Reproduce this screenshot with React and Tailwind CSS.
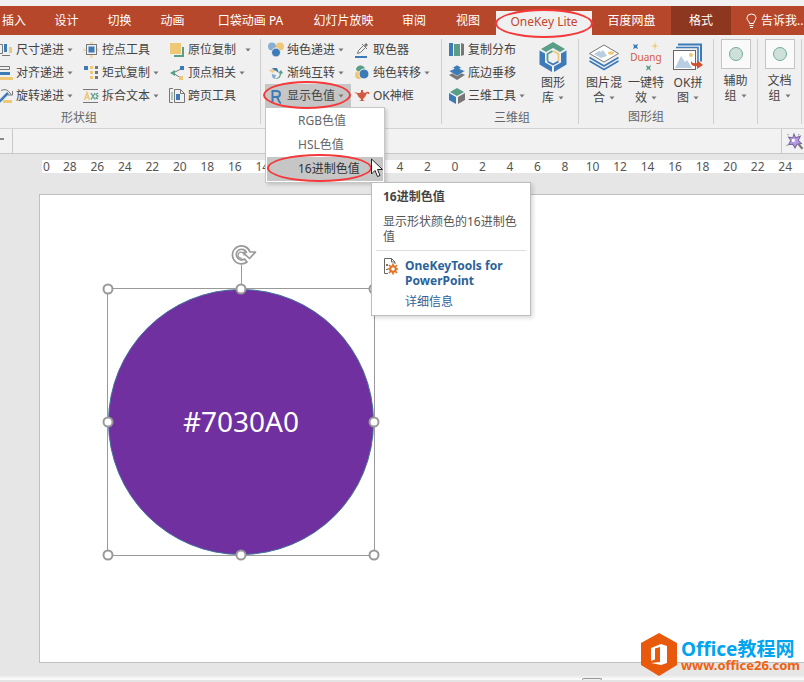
import React from "react";

const FONT = "font-['Noto_Sans','Noto_Sans_CJK_SC',sans-serif]";

const BLUE = "#3d7ab8";
const GREEN = "#5a9e87";
const YELLOW = "#efc877";
const GREY = "#777777";

/* ---------- small 16px ribbon icons ---------- */
const icons = {
  sizeStep: (
    <>
      <path d="M0 2.500h5.500v9H0M5 13.500h8" fill="none" stroke={GREY} />
      <rect x="7" y="2" width="3" height="8" fill={BLUE} />
      <rect x="12" y="5" width="3" height="6" fill={YELLOW} />
    </>
  ),
  alignStep: (
    <>
      <path d="M3 1.500h9.500v3H3" fill="none" stroke={GREY} />
      <rect x="1" y="7" width="12" height="3" fill={BLUE} />
      <rect x="1" y="12" width="15" height="3" fill={YELLOW} />
    </>
  ),
  rotateStep: (
    <>
      <path d="M2 14L11 5" stroke={BLUE} strokeWidth="2.500" />
      <path d="M4 2.500q6-3 10 4M15.500 3v4H11" fill="none" stroke={GREY} />
      <rect x="6" y="12" width="9" height="3" fill={YELLOW} />
    </>
  ),
  handles: (
    <>
      <path d="M8.500 0v16M0 8h16" stroke={YELLOW} strokeWidth="3" opacity=".45" />
      <rect x="3.500" y="2.500" width="10" height="10" fill="#f0f0f0" stroke={GREY} />
      <rect x="5.500" y="4.500" width="6" height="6" fill={BLUE} />
    </>
  ),
  matrix: (
    <>
      <rect x="1" y="1" width="4" height="4" fill={BLUE} />
      <rect x="7" y="1" width="3" height="3" fill={YELLOW} />
      <rect x="7" y="6" width="3" height="3" fill={YELLOW} />
      <rect x="7" y="11" width="3" height="3" fill={YELLOW} />
      <rect x="12" y="1" width="3" height="3" fill={GREY} />
      <rect x="12" y="6" width="3" height="3" fill={GREY} />
      <rect x="12" y="11" width="3" height="3" fill={GREY} />
    </>
  ),
  splitText: (
    <>
      <path d="M0 1.500h15M0 14.500h15" stroke={GREY} />
      <path d="M1.500 12l2.500-7.500L6.500 12M2 9.500h4" fill="none" stroke={YELLOW} strokeWidth="1.500" />
      <path d="M8 5l4 6.500M12 5L8 11.500M15 5l-2 1.500 2 1.500-2 2 2 1" fill="none" stroke={GREEN} strokeWidth="1.300" />
    </>
  ),
  copyInPlace: (
    <>
      <rect x="5" y="5" width="10" height="10" fill={GREEN} />
      <rect x=".500" y=".500" width="12" height="12" fill={YELLOW} stroke="#f0f0f0" />
    </>
  ),
  vertex: (
    <>
      <path d="M12 4L4 8l8 5" fill="none" stroke={GREY} />
      <rect x="11" y="1" width="4" height="4" fill={BLUE} />
      <path d="M1 8l5-3v6z" fill={GREEN} />
      <rect x="10" y="11" width="4" height="4" fill={YELLOW} />
    </>
  ),
  crossPage: (
    <>
      <path d="M4 .500H.500v14H4M5.500 1.500h6l4 4v9h-10zM11.500 1.500v4h4" fill="none" stroke={GREY} />
      <path d="M3 4v8" stroke={GREEN} />
      <rect x="7" y="6" width="4" height="6" fill={BLUE} />
    </>
  ),
  solidStep: (
    <>
      <circle cx="4" cy="4.500" r="4" fill="#87afd4" />
      <circle cx="12" cy="4.500" r="4" fill={YELLOW} />
      <circle cx="8" cy="10.500" r="4.500" fill={BLUE} stroke="#f0f0f0" />
    </>
  ),
  gradient: (
    <>
      <path d="M1 5l6-2 1 2-3 3q-3-1-4-3" fill={YELLOW} opacity=".8" />
      <path d="M4 3h5l2 5-3-2-2-1z" fill={BLUE} />
      <path d="M4 9l4 1-1 4q-4-1-3-5" fill="#87afd4" />
      <path d="M7 14l2-1q4-2 2-6l2-2 2 3-2 1q0 5-6 5" fill={GREEN} />
    </>
  ),
  letterR: (
    <path d="M4.500 15V3h4q3.500 0 3.500 3t-3.500 3h-4M8 9q1.500 0 2.500 3t2.500 3" fill="none" stroke={BLUE} strokeWidth="2" />
  ),
  picker: (
    <>
      <path d="M3.500 11.500l1-3 5-5 2 2-5 5zM8 2l5 5M11.500 4.500L13 3" fill="none" stroke={GREY} />
      <path d="M10 3l2-2 2 2-2 2z" fill={GREY} />
      <rect x="1" y="14" width="12" height="2" fill={BLUE} />
    </>
  ),
  transfer: (
    <>
      <path d="M2 5q0-4 4-4.500T11 4Q7 4 5.500 7z" fill={GREEN} />
      <circle cx="5" cy="10" r="4" fill={YELLOW} />
      <circle cx="10" cy="9" r="5" fill={BLUE} stroke="#f0f0f0" />
    </>
  ),
  lamp: (
    <path d="M0 4l4 1 2 0 1-1V2h2v2l2 1q2-2 4-1 1 2-1 2l-1-1-2 4-2 2v1l2 1H5l2-1v-1Q4 9 3 6z" fill="#d25a42" />
  ),
  copySpread: (
    <>
      <rect x="0" y="1" width="4" height="13" fill={BLUE} />
      <rect x="5" y="2" width="6" height="12" fill={GREEN} />
      <path d="M12 1l3 1v11l-3 1z" fill={GREY} />
    </>
  ),
  bottomShift: (
    <>
      <path d="M0 10l8-4 8 4-8 5z" fill={GREY} />
      <path d="M0 6l5-2V3H3l5-3 5 3h-2v1l5 2-8 5z" fill={BLUE} stroke="#f0f0f0" strokeWidth=".5" />
    </>
  ),
  cube: (
    <>
      <path d="M1 4l7-4 7 4-7 4z" fill={GREEN} />
      <path d="M0 5l7 4v7l-7-4z" fill={BLUE} />
      <path d="M16 5L9 9v7l7-4z" fill={GREY} />
    </>
  ),
};

function Icon({ name }) {
  return (
    <svg className="h-4 w-4 shrink-0" viewBox="0 0 16 16" aria-hidden="true">
      {icons[name]}
    </svg>
  );
}

function Caret({ className = "" }) {
  return (
    <svg className={"h-1 w-1.5 shrink-0 " + className} viewBox="0 0 6 4" aria-hidden="true">
      <path d="M.500 .500h5L3 3.500z" fill="#777" />
    </svg>
  );
}

function Tool({ icon, label, caret, far, active }) {
  return (
    <button
      type="button"
      className={
        "flex h-[23px] w-full items-center gap-[3px] whitespace-nowrap px-[3px] " +
        (active ? "bg-[#c6c6c6]" : "")
      }
    >
      <Icon name={icon} />
      <span>{label}</span>
      {caret && <Caret className={far ? "ml-1.5" : ""} />}
    </button>
  );
}

function Column({ children }) {
  return <div className="flex w-[86px] flex-col">{children}</div>;
}

function Group({ label, labelClass = "", className = "", children }) {
  return (
    <>
      <section className={"flex shrink-0 flex-col " + className}>
        <div className="flex h-[69px]">{children}</div>
        {label && (
          <h2 className={"flex h-[23px] items-center justify-center text-[#666] " + labelClass}>{label}</h2>
        )}
      </section>
      <div className="mb-1 mt-px w-px shrink-0 bg-[#cfcfcf]" />
    </>
  );
}

function BigTool({ lines, children }) {
  return (
    <button type="button" className="flex w-[42px] shrink-0 flex-col items-center gap-[3px] whitespace-nowrap pt-1">
      {children}
      <span className="leading-[15px]">
        {lines[0]}
        <span className="flex items-center justify-center gap-1">
          {lines[1]}
          <Caret />
        </span>
      </span>
    </button>
  );
}

function RoundTool({ text }) {
  return (
    <button type="button" className="flex w-full flex-col items-center gap-1 pt-px">
      <span className="flex h-[30px] w-[30px] items-center justify-center border border-[#c4c4c4] bg-[#fafafa]">
        <span className="h-3.5 w-3.5 rounded-full border border-[#6fae99] bg-[#cfe0da]" />
      </span>
      <span className="leading-[15px]">
        {text}
        <span className="flex items-center justify-center gap-1">
          组
          <Caret />
        </span>
      </span>
    </button>
  );
}

function Ring({ className }) {
  return (
    <span
      className={"pointer-events-none absolute rounded-[50%] border-2 border-[#f5383a] " + className}
      aria-hidden="true"
    />
  );
}

const tabs = [
  ["插入", "w-10 pr-3"],
  ["设计", "w-[53px]"],
  ["切换", "w-[53px]"],
  ["动画", "w-[53px]"],
  ["口袋动画 PA", "w-[103px]"],
  ["幻灯片放映", "w-[83px]"],
  ["审阅", "w-[58px]"],
  ["视图", "w-[50px]"],
];

function TabBar() {
  return (
    <nav className="flex h-[29px] items-end whitespace-nowrap bg-[#b7472a] text-white">
      {tabs.map(([name, width]) => (
        <button key={name} type="button" className={"h-[29px] shrink-0 text-center " + width}>
          {name}
        </button>
      ))}
      <button type="button" className="ml-[3px] h-6 w-24 shrink-0 bg-[#f0f0f0] pb-0.5 text-[#c4472b]">
        OneKey Lite
      </button>
      <button type="button" className="h-[29px] w-[79px] shrink-0">百度网盘</button>
      <button type="button" className="h-[29px] w-[60px] shrink-0 bg-[#8e3720]">格式</button>
      <button type="button" className="flex h-[29px] flex-1 items-center gap-1 pl-[15px]">
        <svg className="h-4 w-[11px] shrink-0" viewBox="0 0 11 16" fill="none" stroke="#fff" aria-hidden="true">
          <path d="M3.500 10.500q0-1.500-1.500-3T1 4.500Q1.500 1 5.500 1T10 4.500q0 1.500-1 3t-1.500 3zM3.500 12.500h4M4 14.500h3" />
        </svg>
        告诉我...
      </button>
    </nav>
  );
}

function Tooltip() {
  return (
    <div
      role="tooltip"
      className="absolute left-[106px] top-[75px] w-40 border border-[#bdbdbd] bg-white px-1 pb-[6px] pt-1.5 leading-[15px] text-[#555] shadow-[2px_2px_4px_rgba(0,0,0,0.15)]"
    >
      <p className="px-[7px] font-bold text-[#444]">16进制色值</p>
      <p className="mt-2.5 px-[7px]">显示形状颜色的16进制色值</p>
      <hr className="mt-1.5 border-[#dedede]" />
      <div className="flex gap-[7px] pl-2 pt-[7px]">
        <svg className="h-[18px] w-[14px] shrink-0" viewBox="0 0 14 18" aria-hidden="true">
          <path d="M4 15.500H.500V.500h7l3.500 3.500v2M7.500 .500V4H11" fill="none" stroke="#666" />
          <path d="M3 6v2M3 11v1" stroke="#777" strokeWidth="2" />
          <circle cx="9" cy="11" r="2.800" fill="none" stroke="#e37222" strokeWidth="2" />
          <path d="M9 5.500v3M9 13.500v3M3.500 11h3M11.500 11H14M5 7l2 2M11 13l2 2M13 7l-2 2M7 13l-2 2" stroke="#e37222" strokeWidth="1.700" />
        </svg>
        <div className="text-[#2b6299]">
          <p className="whitespace-nowrap font-bold">
            OneKeyTools for
            <br />
            PowerPoint
          </p>
          <a href="#details" className="mt-1.5 block">详细信息</a>
        </div>
      </div>
    </div>
  );
}

function ColorMenu() {
  return (
    <div className="absolute left-0 top-[23px] z-20 w-[120px]">
      <div className="border border-[#c6c6c6] bg-white p-px shadow-[2px_2px_3px_rgba(0,0,0,0.15)]">
        <button type="button" className="block h-6 w-full pl-[31px] text-left text-[#666]">RGB色值</button>
        <button type="button" className="block h-6 w-full pl-[31px] text-left text-[#666]">HSL色值</button>
        <button type="button" className="block h-6 w-full bg-[#c6c6c6] pl-[31px] text-left text-[#333]">
          16进制色值
        </button>
      </div>
      <Tooltip />
      <Ring className="left-[2px] top-[47px] h-[28px] w-[105px]" />
      <svg className="absolute left-[106px] top-[51px] h-5 w-[13px]" viewBox="0 0 13 20" aria-hidden="true">
        <path d="M.500 1v15l3.500-3.500 2.500 6 2.500-1-2.500-6h5z" fill="#fff" stroke="#222" />
      </svg>
    </div>
  );
}

function Ribbon() {
  return (
    <div className="flex h-[94px] border-b border-[#d2d2d2] bg-[#f0f0f0] pt-[3px]">
      <Group className="w-[260px]" label="形状组" labelClass="w-[158px]">
        <div className="-ml-1.5 flex">
          <Column>
            <Tool icon="sizeStep" label="尺寸递进" caret />
            <Tool icon="alignStep" label="对齐递进" caret />
            <Tool icon="rotateStep" label="旋转递进" caret />
          </Column>
          <Column>
            <Tool icon="handles" label="控点工具" />
            <Tool icon="matrix" label="矩式复制" caret />
            <Tool icon="splitText" label="拆合文本" caret />
          </Column>
          <Column>
            <Tool icon="copyInPlace" label="原位复制" caret far />
            <Tool icon="vertex" label="顶点相关" caret />
            <Tool icon="crossPage" label="跨页工具" />
          </Column>
        </div>
      </Group>

      <Group className="w-[180px] pl-1">
        <Column>
          <Tool icon="solidStep" label="纯色递进" caret />
          <Tool icon="gradient" label="渐纯互转" caret />
          <div className="relative">
            <Tool icon="letterR" label="显示色值" caret active />
            <ColorMenu />
            <Ring className="-left-0.5 -top-[3px] z-30 h-7 w-[88px]" />
          </div>
        </Column>
        <Column>
          <Tool icon="picker" label="取色器" />
          <Tool icon="transfer" label="纯色转移" caret />
          <Tool icon="lamp" label="OK神框" />
        </Column>
      </Group>

      <Group className="w-[136px] pl-1" label="三维组">
        <Column>
          <Tool icon="copySpread" label="复制分布" />
          <Tool icon="bottomShift" label="底边垂移" />
          <Tool icon="cube" label="三维工具" caret />
        </Column>
        <BigTool lines={["图形", "库"]}>
          <svg className="h-[30px] w-7" viewBox="0 0 28 30" aria-hidden="true">
            <path d="M2 7l12-7 12 7-5 3-7-4-7 4z" fill={GREEN} />
            <path d="M.500 8.500L6 11.500v9l7 4V30L.500 22.500z" fill={BLUE} />
            <path d="M27.500 8.500L22 11.500v9l-7 4V30l12.500-7.500z" fill={BLUE} />
            <path d="M8.500 19v-7l5-3" fill="none" stroke={GREEN} strokeWidth="1.800" />
            <path d="M14.500 9l5 3v7" fill="none" stroke={YELLOW} strokeWidth="1.800" />
            <path d="M19.500 19.500L14 22.500l-5.500-3" fill="none" stroke={BLUE} strokeWidth="1.800" />
          </svg>
        </BigTool>
      </Group>

      <Group className="w-[134px] px-1" label="图形组">
        <BigTool lines={["图片混", "合"]}>
          <svg className="h-[30px] w-8" viewBox="0 0 32 30" aria-hidden="true">
            <path d="M1.500 19L16 27.500 30.500 19M1.500 15.500L16 24l14.500-8.500" fill="none" stroke={BLUE} strokeWidth="1.700" />
            <path d="M1.500 11.500L16 3l14.500 8.500L16 20z" fill="#fff" stroke="#777" />
            <path d="M6 12l5-3 2 1 2-2 4 6-6 2z" fill="#b9cde3" />
            <ellipse cx="23" cy="11" rx="3" ry="1.700" fill={YELLOW} />
          </svg>
        </BigTool>
        <BigTool lines={["一键特", "效"]}>
          <span className="flex h-[30px] flex-col items-center">
            <svg className="h-2 w-7" viewBox="0 0 28 8" aria-hidden="true">
              <path d="M1 2l2.500 1L6 2 5 4.500 6 7 3.500 6 1 7l1-2.500z" fill={BLUE} />
              <path d="M23 0l.8 3.200L27 4l-3.200.8L23 8l-.8-3.200L19 4l3.200-.8z" fill={YELLOW} />
            </svg>
            <span className="text-[10px] leading-[14px] text-[#d05a40]">Duang</span>
            <svg className="h-2 w-7" viewBox="0 0 28 8" aria-hidden="true">
              <path d="M14 1l2.500 1.500L19 1l-1 3 1 3-2.500-2L14 7l1-3z" fill={GREEN} />
            </svg>
          </span>
        </BigTool>
        <BigTool lines={["OK拼", "图"]}>
          <svg className="h-[30px] w-[30px]" viewBox="0 0 30 30" aria-hidden="true">
            <path d="M5 2.500h23v17" fill="none" stroke={BLUE} strokeWidth="2" />
            <path d="M3 5.500h22v16" fill="none" stroke={BLUE} strokeWidth="1.500" />
            <rect x=".500" y="8.500" width="22" height="19" fill="#fff" stroke="#666" />
            <path d="M2 26l6-12 4 6 2-2 5 8z" fill="#b9cde3" />
            <circle cx="18" cy="13" r="2" fill={YELLOW} />
            <path d="M18 19q1 3 6 2v-3l6 5-6 4v-3q-7 1-6-5" fill="#d2502f" />
          </svg>
        </BigTool>
      </Group>

      <Group className="w-[43px]">
        <RoundTool text="辅助" />
      </Group>
      <Group className="w-[43px]">
        <RoundTool text="文档" />
      </Group>
    </div>
  );
}

function AnimationBar() {
  return (
    <div className="flex h-[25px] items-stretch border-b border-[#c9c9c9] bg-[#f2f2f2]">
      <div className="flex w-[13px] items-center border-r border-[#c9c9c9]">
        <span className="-mt-1 h-0.5 w-1 bg-[#888]" />
      </div>
      <div className="flex-1" />
      <button type="button" aria-label="动画" className="flex w-[23px] items-center justify-end border-l border-[#c9c9c9]">
        <svg className="h-[17px] w-[18px] shrink-0" viewBox="0 0 16 16" aria-hidden="true">
          <path d="M11 10l4 5" stroke="#777" strokeWidth="2" />
          <path d="M7 1l1.500 3.500L13 3l-2 4 3 3-4 .5L8 14l-2-3.500-4 .5 2-4-2-3 4 .5z" fill="#b99ae8" stroke="#7d6a9c" />
          <circle cx="6.500" cy="7" r="1.500" fill="#fff" />
          <path d="M1 1l1 1M12 1l-1 1M0 12l1-1" stroke="#999" />
        </svg>
      </button>
    </div>
  );
}

const ticks = Array.from({ length: 27 }, (_, i) => Math.abs(28 - i * 2));

function Ruler() {
  return (
    <div className="ml-[42px] mt-1.5 flex h-[13px] items-center bg-white pr-[5px] text-center text-[#555]">
      <span className="w-[14px] text-left pl-px">0</span>
      {ticks.map((n, i) => (
        <span key={i} className="min-w-0 flex-1">
          {n}
        </span>
      ))}
    </div>
  );
}

const handles = [
  "left-0 top-0",
  "left-1/2 top-0",
  "left-full top-0",
  "left-0 top-1/2",
  "left-full top-1/2",
  "left-0 top-full",
  "left-1/2 top-full",
  "left-full top-full",
];

function SelectedCircle() {
  return (
    <div className="absolute left-[67px] top-[93px] h-[268px] w-[268px] border border-[#999]">
      <div className="flex h-full w-full items-center justify-center rounded-full border border-[#41719c] bg-[#7030a0] text-[28px] text-white">
        #7030A0
      </div>
      <span className="absolute -top-6 left-1/2 h-6 w-px bg-[#999]" />
      <svg className="absolute -top-[46px] left-[122px] h-[23px] w-[27px]" viewBox="0 0 27 23" aria-hidden="true">
        <path d="M17 19A9 9 0 1 1 20 9h5.500L19.500 15.500 13 9.500h3.500A5.300 5.300 0 1 0 14.500 16z" fill="#fff" stroke="#999" strokeWidth="1.700" strokeLinejoin="round" />
        <path d="M14 12.500a3 3 0 1 0-2 2.500" fill="none" stroke="#999" strokeWidth="1.200" />
      </svg>
      {handles.map((pos) => (
        <span
          key={pos}
          className={
            "absolute h-[11px] w-[11px] -translate-x-1/2 -translate-y-1/2 rounded-full border-2 border-[#999] bg-white " + pos
          }
        />
      ))}
    </div>
  );
}

function Watermark() {
  return (
    <div className="absolute bottom-[6px] right-1 flex items-center gap-1">
      <svg className="h-[43px] w-9" viewBox="0 0 36 43" aria-hidden="true">
        <path d="M18 0l18 10v22L18 43 0 32V10z" fill="#e8590c" />
        <path d="M10 15l10-4 6 2v17l-6 2-10-2 9-1V14l-5 1.500v11L10 28z" fill="#fff" />
      </svg>
      <div className="whitespace-nowrap pt-1 font-bold">
        <p className="text-[19px] leading-[18px] text-[#00a4ef]">Office教程网</p>
        <p className="text-[13px] leading-[15px] text-[#ee6210]">www.office26.com</p>
      </div>
    </div>
  );
}

export default function App() {
  return (
    <div className={"relative flex min-h-screen flex-col overflow-hidden bg-[#e6e6e6] text-xs text-[#444] " + FONT}>
      <header>
        <div className="h-1.5 bg-[#f1f1f1]" />
        <div className="relative">
          <TabBar />
          <Ring className="left-[495px] top-[3px] z-10 h-[29px] w-[98px]" />
        </div>
        <Ribbon />
        <AnimationBar />
      </header>
      <main className="flex flex-1 flex-col">
        <Ruler />
        <div className="relative ml-[39px] mt-[21px] flex-1 border border-r-0 border-[#c0c0c0] bg-white">
          <SelectedCircle />
        </div>
      </main>
      <footer className="mt-[13px] flex h-1.5 flex-col justify-between border-y-2 border-t-[#f0f0f0] border-b-[#e4e4e4] bg-[#fafafa]">
        <div className="ml-[582px] h-1 w-5 rounded-t-sm border border-b-0 border-[#999] bg-[#f0f0f0]" />
      </footer>
      <Watermark />
    </div>
  );
}
